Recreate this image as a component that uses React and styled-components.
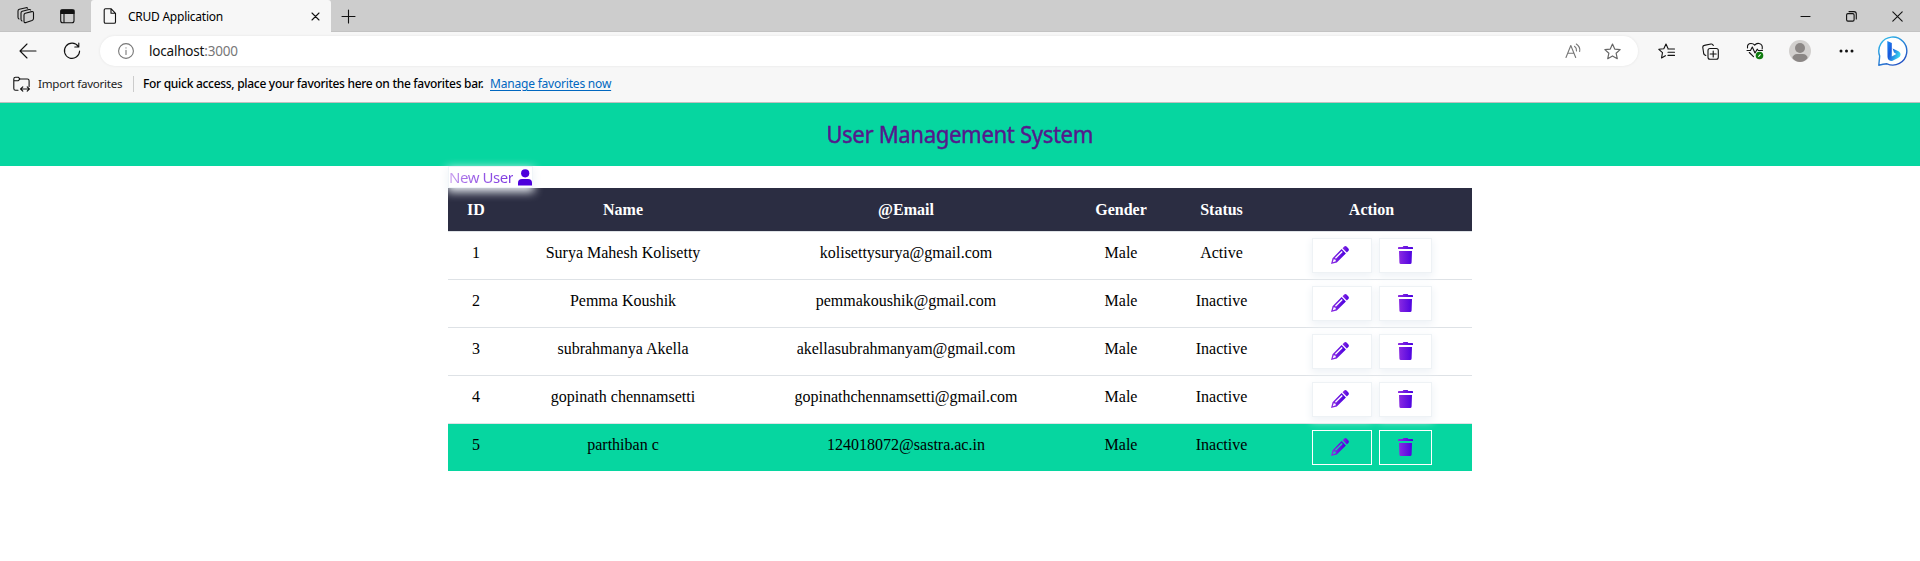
import React from "react";
import styled, { createGlobalStyle } from "styled-components";

const Global = createGlobalStyle`
  *{box-sizing:border-box}
  html,body{margin:0;background:#fff;overflow:hidden}
  body{font-family:"Liberation Serif","Times New Roman",serif;color:#000}
`;
const ui = `"Noto Sans","Open Sans",sans-serif`;
const Window = styled.div`height:561px;display:flex;flex-direction:column;`;
const Chrome = styled.header`height:103px;background:#f7f7f7;border-bottom:1px solid #c0c0c0;font-family:${ui};flex:none;`;
const TabStrip = styled.div`height:32px;background:#cdcdcd;display:flex;box-shadow:inset 0 -1px #c3c3c3;`;
const StripTools = styled.div`width:91px;display:flex;align-items:center;padding-left:17px;gap:25px;`;
const Tab = styled.div`width:240px;background:#f7f7f7;border-radius:3px 3px 0 0;display:flex;align-items:center;padding:0 11px 0 12px;font-size:12px;`;
const TabTitle = styled.span`margin-left:11px;flex:1;white-space:nowrap;letter-spacing:-.25px;`;
const NewTab = styled.div`display:flex;align-items:center;padding-left:10px;flex:1;`;
const Controls = styled.div`display:flex;align-items:center;gap:35px;padding-right:17px;`;
const Toolbar = styled.div`height:38px;display:flex;align-items:center;padding:0 12px 0 19px;`;
const NavIcons = styled.div`display:flex;gap:26px;width:81px;`;
const Address = styled.div`width:1538px;height:30px;background:#fff;border-radius:15px;display:flex;align-items:center;padding:0 17px 0 18px;box-shadow:0 0 3px rgba(0,0,0,.08);`;
const Url = styled.div`margin-left:15px;flex:1;font-size:13.5px;color:#111;letter-spacing:-.2px;`;
const Port = styled.span`color:#777;`;
const AddressIcons = styled.div`display:flex;gap:22px;`;
const ToolIcons = styled.div`flex:1;display:grid;grid-template-columns:44px 44px 43px 50px 39px 30px;align-items:center;padding-left:20px;`;
const Favorites = styled.div`height:32px;display:flex;align-items:center;font-size:12px;padding:0 0 3px 13px;margin-top:-1px;`;
const Import = styled.span`margin-left:8px;width:85px;white-space:nowrap;letter-spacing:-.25px;font-size:11.6px;color:#222;`;
const Divider = styled.i`width:1px;height:16px;background:#ccc;margin:0 9px 0 10px;`;
const Hint = styled.span`width:341px;flex:none;margin-right:6px;white-space:nowrap;font-weight:500;letter-spacing:-.29px;`;
const Link = styled.a`color:#0067c0;text-decoration:underline;text-underline-offset:2px;letter-spacing:-.2px;`;
const Banner = styled.div`height:63px;background:#06d6a0;display:flex;justify-content:center;align-items:center;flex:none;padding-bottom:2px;`;
const Title = styled.h1`margin:0;font:400 24px "Noto Sans","Open Sans",sans-serif;color:#551a8b;-webkit-text-stroke:.5px #551a8b;letter-spacing:-.3px;transform:scaleX(.916);`;
const Content = styled.main`width:1024px;margin:0 auto;`;
const NewUser = styled.div`width:85px;height:22px;position:relative;z-index:1;border:1px solid #f0f5f8;box-shadow:0 3px 10px 1px #eff3f7;background:#fff;display:flex;align-items:center;justify-content:space-between;`;
const NewUserText = styled.span`font:400 15px "Noto Sans","Open Sans",sans-serif;white-space:nowrap;background:linear-gradient(90deg,#cda6ef,#a56be8 25%,#7a35e0);background-clip:text;color:transparent;letter-spacing:-.45px;`;
const Table = styled.div`font-size:16px;`;
const Cell = styled.div`padding-top:12px;white-space:nowrap;`;
const Row = styled.div`
  height:48px;display:grid;grid-template-columns:56px 238px 328px 102px 99px 201px;text-align:center;
  border-top:1px solid #dee2e6;line-height:18px;background:${p => p.$selected ? "#06d6a0" : "transparent"};
`;
const HeadRow = styled(Row)`height:43px;border:0;padding-top:1px;background:#2b2d42;color:#fff;font-weight:700;`;
const Actions = styled.div`display:flex;gap:7px;padding:6px 0 0 41px;`;
const ActionButton = styled.button`
  width:${p => p.$w}px;height:35px;padding:0 ${p => p.$w === 60 ? 4 : 0}px 1px 0;background:transparent;border:1px solid ${p => p.$selected ? "#fff" : "#eef2f5"};
  box-shadow:${p => p.$selected ? "none" : "0 3px 8px 1px #eff3f7"};display:flex;align-items:center;justify-content:center;
`;
const Icon = styled.svg`display:block;flex:none;width:${p => p.$s || 16}px;height:${p => p.$h || p.$s || 16}px;fill:none;stroke:${p => p.$c || "#111"};stroke-width:${p => p.$t || 1.1};stroke-linecap:round;stroke-linejoin:round;`;

const STAR = "M8 1 10.1 5.7 15.2 6.2 11.4 9.6 12.5 14.8 8 12.2 3.5 14.8 4.6 9.6 .8 6.2 5.9 5.7Z";

const Pencil = () => (
  <Icon $s={18} viewBox="0 0 18 18">
    <g fill="url(#violet)" stroke="none">
      <path fillRule="evenodd" d="M10.6 3.1 14.9 7.4 5.8 16.5 0 18 1.5 12.2ZM2.7 13.2 1.8 16.2 4.8 15.3 4.6 13.8ZM10.7 5 4 11.7 4.9 12.7 11.7 6Z" />
      <path d="M11.5 2.2 13 .7Q14.4-.5 15.8.8L17.2 2.2Q18.5 3.6 17.3 5L15.8 6.5Z" />
    </g>
  </Icon>
);
const Trash = () => (
  <Icon $s={15} $h={18} viewBox="0 0 15 18">
    <path fill="url(#violet)" stroke="none" d="M1 5H14L13.6 16.5Q13.5 18 12.2 18H2.8Q1.5 18 1.4 16.5ZM0 1.4Q0 1 .6 1H4.7L5.4 0H9.6L10.3 1H14.4Q15 1 15 1.4V3H0Z" />
  </Icon>
);
const users = [
  ["1", "Surya Mahesh Kolisetty", "kolisettysurya@gmail.com", "Male", "Active"],
  ["2", "Pemma Koushik", "pemmakoushik@gmail.com", "Male", "Inactive"],
  ["3", "subrahmanya Akella", "akellasubrahmanyam@gmail.com", "Male", "Inactive"],
  ["4", "gopinath chennamsetti", "gopinathchennamsetti@gmail.com", "Male", "Inactive"],
  ["5", "parthiban c", "124018072@sastra.ac.in", "Male", "Inactive"],
];

export default function App() {
  return (
    <Window>
      <Global />
      <Chrome>
        <TabStrip>
          <StripTools>
            <Icon $s={18} viewBox="0 0 18 18"><path d="M8.3 6.3 14.7 4.6Q16.4 4.3 16.5 6V11.5Q16.5 13 15 13.6L9 15.6Q7 16 7 14.2V8Q7 6.7 8.3 6.3ZM5 14Q4 13.5 4 12.3V6Q4 4.7 5.3 4.3L12 2.5Q13.3 2.3 13.6 3M2 12Q1 11.5 1 10.3V4Q1 2.7 2.3 2.3L9 .7Q10.2.5 10.6 1.2" /></Icon>
            <Icon $s={15} viewBox="0 0 15 15"><rect x=".7" y=".7" width="13.3" height="13" rx="2" /><path d="M1 1H14V4.5H1Z" fill="#111" /><path d="M4 5V13.5" /></Icon>
          </StripTools>
          <Tab>
            <Icon $s={14} $h={16} viewBox="0 0 14 16"><path d="M2.5.7H8L12.5 5.3V14Q12.5 15.3 11.2 15.3H2.5Q1.2 15.3 1.2 14V2Q1.2.7 2.5.7ZM8 .7V5.3H12.5" /></Icon>
            <TabTitle>CRUD Application</TabTitle>
            <Icon $s={9} viewBox="0 0 9 9"><path d="M1 1 8 8M8 1 1 8" /></Icon>
          </Tab>
          <NewTab><Icon $s={15} viewBox="0 0 15 15"><path d="M7.5 1V14M1 7.5H14" /></Icon></NewTab>
          <Controls>
            <Icon $s={11} viewBox="0 0 11 11"><path d="M1 5.5H10" /></Icon>
            <Icon $s={11} viewBox="0 0 11 11"><rect x=".6" y="2.6" width="7.5" height="7.5" rx="1.3" /><path d="M3 .6H8Q10.3.6 10.3 3V8" /></Icon>
            <Icon $s={11} viewBox="0 0 11 11"><path d="M.8.8 10.2 10.2M10.2.8.8 10.2" /></Icon>
          </Controls>
        </TabStrip>
        <Toolbar>
          <NavIcons>
            <Icon $s={18} viewBox="0 0 18 18"><path d="M8 2 1 9 8 16M1 9H17" /></Icon>
            <Icon $s={18} viewBox="0 0 18 18"><path d="M15.3 4.5A7.6 7.6 0 1 0 16.6 9M15.8 1V5H11.8" /></Icon>
          </NavIcons>
          <Address>
            <Icon $s={16} $c="#777" viewBox="0 0 16 16"><circle cx="8" cy="8" r="7.4" /><path d="M8 7.2V11.5M8 4.7V4.9" /></Icon>
            <Url>localhost<Port>:3000</Port></Url>
            <AddressIcons>
              <Icon $s={17} $c="#777" viewBox="0 0 17 17"><path d="M1 14.5 5.8 2.5 10.7 14.5M2.7 10.3H9M9.5 3.3Q11.8 5 11.5 8M11.3 1Q15.6 4 14.7 8.5" /></Icon>
              <Icon $s={17} $c="#666" viewBox="0 0 16 16"><path d={STAR} /></Icon>
            </AddressIcons>
          </Address>
          <ToolIcons>
            <Icon $s={17} viewBox="0 0 17 17"><path d="M10 5.5 8 1 5.8 5.7.8 6.3 4.5 9.7 3.5 15 7.4 12.7M10 6H16.5M10 9.2H16.5M10 12.4H16.5" /></Icon>
            <Icon $s={17} viewBox="0 0 17 17"><rect x="6" y="5.5" width="10.3" height="10.8" rx="2" /><path d="M11.2 8V14M8.2 11H14.2M3.8 12.5 2.9 12Q2 11.7 1.7 10.5L.8 4.5Q.6 2.7 2.3 2.4L9 1Q10.7.7 11.3 2.5" /></Icon>
            <Icon $s={18} viewBox="0 0 18 18"><path d="M1.5 6Q1 1.5 5 1.5Q7.5 1.5 8.7 3.2Q10.3 1 13 1.5Q17 2.3 16.2 7M1 8.5H4.5L6.3 5 9 11 11.2 7.2 12.3 8.5H16.5M3.3 10.5 7.5 14.6" /><circle cx="13.5" cy="13.5" r="3.8" fill="#107c10" stroke="none" /><path d="m12.7 14.3 1.6-1.6" stroke="#fff" /></Icon>
            <Icon $s={22} viewBox="0 0 22 22"><circle cx="11" cy="11" r="11" fill="#d2d0ce" stroke="none" /><circle cx="11" cy="8" r="5" fill="#8b8785" stroke="none" /><path d="M3.3 18Q4.5 14 8 14H14Q17.5 14 18.7 18Q15.5 22 11 22T3.3 18" fill="#8b8785" stroke="none" /></Icon>
            <Icon $s={15} $h={4} viewBox="0 0 15 4"><g fill="#111" stroke="none"><circle cx="2" cy="2" r="1.5" /><circle cx="7.5" cy="2" r="1.5" /><circle cx="13" cy="2" r="1.5" /></g></Icon>
            <Icon $s={30} viewBox="0 0 30 30"><path d="M.8 29.2 1.7 20A14 14 0 1 1 9 27.8Q5 28.3.8 29.2Z" fill="#fff" stroke="url(#bubble)" strokeWidth="1.4" /><path d="M9.3 5 13.8 7V20.5L18.3 18 16 16.5 14.6 12.6 20 15Q22.8 16.3 22.5 19Q22.2 20.8 20 22L14 25Q9.8 25 9.5 21Z" fill="url(#bing)" stroke="none" /></Icon>
          </ToolIcons>
        </Toolbar>
        <Favorites>
          <Icon $s={17} $h={16} viewBox="0 0 17 16"><path d="M5 14.3H2.5Q.8 14.3.8 12.5V3Q.8 1.2 2.5 1.2H5.2L7 3H14.4Q16.1 3 16.1 4.7V10.5M.8 4.7H5.3L7 3M8 13H16M9.8 10.8 7.6 13 9.8 15.2M14.2 10.8 16.4 13 14.2 15.2" /></Icon>
          <Import>Import favorites</Import><Divider />
          <Hint>For quick access, place your favorites here on the favorites bar.</Hint>
          <Link>Manage favorites now</Link>
        </Favorites>
      </Chrome>
      <Banner><Title>User Management System</Title></Banner>
      <Content>
        <NewUser>
          <NewUserText>New User</NewUserText>
          <Icon $s={14} $h={17} viewBox="0 0 14 17"><g fill="#4d00dc" stroke="none"><circle cx="7.2" cy="4.3" r="4.1" /><path d="M0 16.5V14Q0 10 4 10H10Q14 10 14 14V16.5Z" /></g></Icon>
        </NewUser>
        <Table>
          <HeadRow>{["ID", "Name", "@Email", "Gender", "Status", "Action"].map(h => <Cell key={h}>{h}</Cell>)}</HeadRow>
          {users.map((u, i) => (
            <Row key={u[0]} $selected={i === 4}>
              {u.map((v, j) => <Cell key={j}>{v}</Cell>)}
              <Actions>
                <ActionButton $w={60} $selected={i === 4}><Pencil /></ActionButton>
                <ActionButton $w={53} $selected={i === 4}><Trash /></ActionButton>
              </Actions>
            </Row>
          ))}
        </Table>
      </Content>
      <svg width="0" height="0">
        <defs>
          <linearGradient id="violet"><stop stopColor="#8e2de2" /><stop offset="1" stopColor="#4a00e0" /></linearGradient>
          <linearGradient id="bubble" x1="0" y1="0" x2=".7" y2="1"><stop stopColor="#30c4ee" /><stop offset="1" stopColor="#2452c4" /></linearGradient>
          <linearGradient id="bing" x1="0" y1="0" x2="1" y2=".6"><stop stopColor="#1b8ff5" /><stop offset=".4" stopColor="#1a58dc" /><stop offset="1" stopColor="#38d5ef" /></linearGradient>
        </defs>
      </svg>
    </Window>
  );
}
